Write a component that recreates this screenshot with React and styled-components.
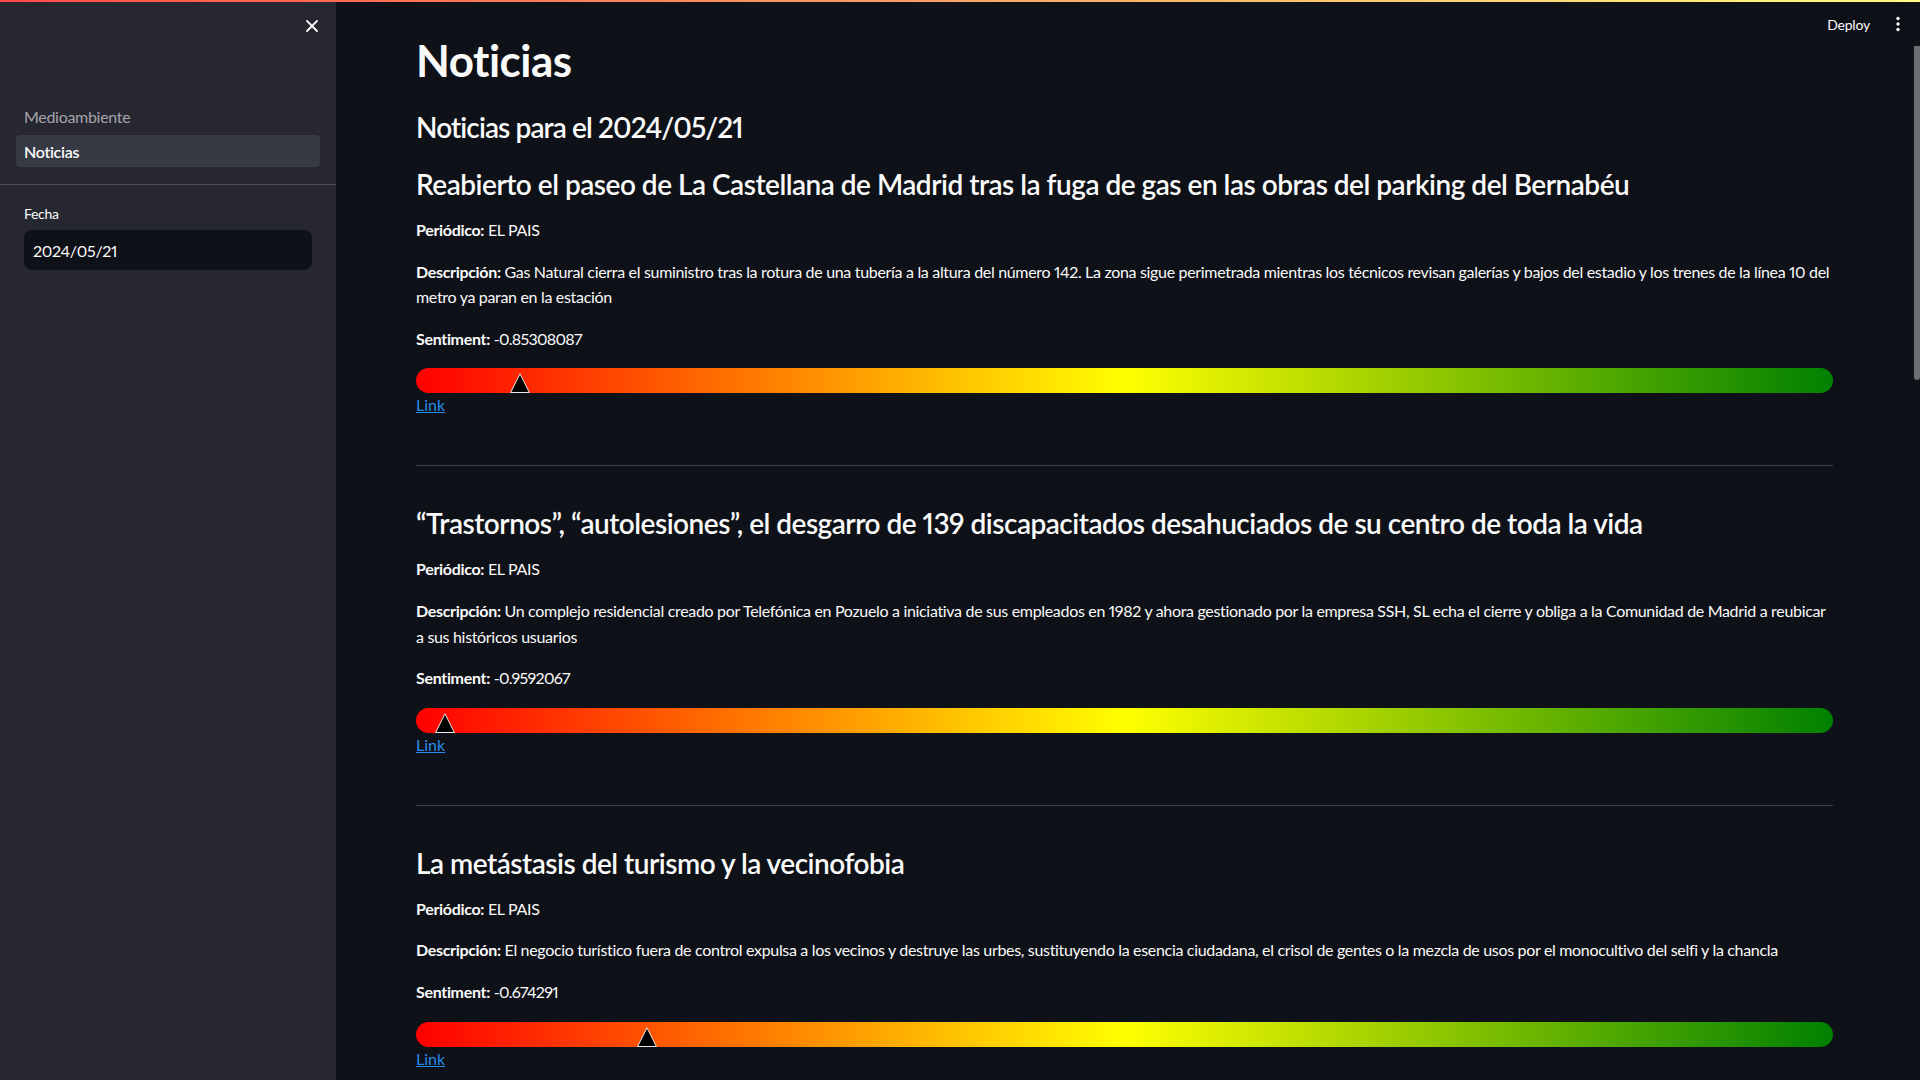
import React from "react";
import styled, { createGlobalStyle } from "styled-components";

const GlobalStyle = createGlobalStyle`
  html, body { margin: 0; padding: 0; height: 100%; overflow: hidden; background: #0e1117; }
  body {
    font-family: Lato, "Noto Sans", sans-serif;
    color: rgb(250,250,250);
    font-variant-numeric: proportional-nums;
    letter-spacing: -0.3px;
  }
  * { box-sizing: border-box; }
`;

const AppShell = styled.div`
  display: flex;
  flex-direction: column;
  width: 100vw;
  height: 100vh;
  overflow: hidden;
`;

const Decoration = styled.div`
  height: 2px;
  flex: none;
  background: linear-gradient(90deg, rgb(255, 75, 75), rgb(255, 253, 128));
`;

const Body = styled.div`
  flex: 1;
  display: flex;
  min-height: 0;
`;

const Sidebar = styled.aside`
  width: 336px;
  flex: none;
  background: #262730;
  display: flex;
  flex-direction: column;
`;

const SidebarHeader = styled.div`
  height: 48px;
  display: flex;
  align-items: center;
  justify-content: flex-end;
  padding-right: 12px;
`;

const IconButton = styled.button`
  width: 24px;
  height: 24px;
  border: none;
  background: transparent;
  padding: 0;
  display: flex;
  align-items: center;
  justify-content: center;
  cursor: pointer;
  color: rgb(250, 250, 250);
`;

const Nav = styled.nav`
  margin-top: 50px;
  padding: 0 16px 17px;
  display: flex;
  flex-direction: column;
  gap: 3px;
  border-bottom: 1px solid rgba(250, 250, 250, 0.2);
`;

const NavItem = styled.a`
  height: 32px;
  display: flex;
  align-items: center;
  padding-left: 8px;
  border-radius: 4px;
  font-size: 16px;
  text-decoration: none;
  color: ${(p) => (p.$active ? "rgb(250,250,250)" : "rgba(250,250,250,0.6)")};
  font-weight: ${(p) => (p.$active ? 600 : 400)};
  background: ${(p) => (p.$active ? "rgba(151,166,195,0.15)" : "transparent")};
`;

const SidebarContent = styled.div`
  padding: 19px 24px 0;
  display: flex;
  flex-direction: column;
`;

const FieldLabel = styled.label`
  font-size: 14px;
  line-height: 20px;
  margin-bottom: 6px;
`;

const DateInput = styled.div`
  height: 40px;
  border-radius: 8px;
  background: #0e1117;
  display: flex;
  align-items: center;
  padding-left: 9px;
  font-size: 16px;
`;

const Main = styled.main`
  flex: 1;
  position: relative;
  overflow: hidden;
  padding: 32px 87px 0 80px;
  display: flex;
  flex-direction: column;
`;

const Header = styled.div`
  position: absolute;
  top: 0;
  right: 0;
  height: 44px;
  display: flex;
  align-items: center;
  gap: 16px;
  padding-right: 10px;
`;

const DeployButton = styled.button`
  border: none;
  background: transparent;
  padding: 0;
  font-family: inherit;
  letter-spacing: -0.2px;
  font-size: 14px;
  color: rgb(250, 250, 250);
  cursor: pointer;
`;

const ScrollThumb = styled.div`
  position: absolute;
  right: 0;
  top: 44px;
  width: 6px;
  height: 334px;
  border-radius: 0 0 3px 3px;
  background: rgba(250, 250, 250, 0.4);
`;

const PageTitle = styled.h1`
  margin: 0;
  font-size: 44px;
  line-height: 53px;
  font-weight: 700;
  letter-spacing: -0.5px;
`;

const SubTitle = styled.h3`
  margin: 23px 0 0;
  font-size: 28px;
  line-height: 34px;
  font-weight: 600;
  letter-spacing: -0.9px;
`;

const Article = styled.article`
  display: flex;
  flex-direction: column;
  gap: 16px;
  margin-top: ${(p) => (p.$first ? "23px" : "40px")};
`;

const ArticleTitle = styled.h3`
  margin: 0;
  font-size: 28px;
  line-height: 34px;
  font-weight: 600;
  letter-spacing: -0.5px;
`;

const Para = styled.p`
  margin: 0;
  font-size: 16px;
  line-height: 25.6px;
  letter-spacing: -0.32px;
`;

const Label = styled.strong`
  font-weight: 700;
`;

const Num = styled.span`
  letter-spacing: -0.7px;
`;

const BarBlock = styled.div`
  display: flex;
  flex-direction: column;
  margin-top: 1px;
`;

const Bar = styled.div`
  position: relative;
  height: 25px;
  border-radius: 12.5px;
  background: linear-gradient(to right, #ff0000, #ffff00, #008000);
`;

const Marker = styled.svg`
  position: absolute;
  bottom: 0;
  transform: translateX(-50%);
`;

const NewsLink = styled.a`
  align-self: flex-start;
  font-size: 16px;
  line-height: 24px;
  letter-spacing: 0;
  color: rgb(40, 140, 235);
  text-decoration: underline;
`;

const Divider = styled.hr`
  margin: 48px 0 0;
  border: none;
  border-bottom: 1px solid rgba(250, 250, 250, 0.2);
  height: 0;
`;

const news = [
  {
    title: "Reabierto el paseo de La Castellana de Madrid tras la fuga de gas en las obras del parking del Bernabéu",
    paper: "EL PAIS",
    desc: "Gas Natural cierra el suministro tras la rotura de una tubería a la altura del número 142. La zona sigue perimetrada mientras los técnicos revisan galerías y bajos del estadio y los trenes de la línea 10 del metro ya paran en la estación",
    sentiment: -0.85308087,
    label: "-0.85308087",
  },
  {
    title: "“Trastornos”, “autolesiones”, el desgarro de 139 discapacitados desahuciados de su centro de toda la vida",
    paper: "EL PAIS",
    desc: "Un complejo residencial creado por Telefónica en Pozuelo a iniciativa de sus empleados en 1982 y ahora gestionado por la empresa SSH, SL echa el cierre y obliga a la Comunidad de Madrid a reubicar a sus históricos usuarios",
    sentiment: -0.9592067,
    label: "-0.9592067",
  },
  {
    title: "La metástasis del turismo y la vecinofobia",
    paper: "EL PAIS",
    desc: "El negocio turístico fuera de control expulsa a los vecinos y destruye las urbes, sustituyendo la esencia ciudadana, el crisol de gentes o la mezcla de usos por el monocultivo del selfi y la chancla",
    sentiment: -0.674291,
    label: "-0.674291",
  },
];

function CloseIcon() {
  return (
    <svg width="12" height="12" viewBox="0 0 12 12">
      <path d="M1 1 L11 11 M11 1 L1 11" stroke="currentColor" strokeWidth="1.8" strokeLinecap="round" />
    </svg>
  );
}

function KebabIcon() {
  return (
    <svg width="4" height="16" viewBox="0 0 4 16">
      <circle cx="2" cy="2.5" r="1.7" fill="rgb(250,250,250)" />
      <circle cx="2" cy="8" r="1.7" fill="rgb(250,250,250)" />
      <circle cx="2" cy="13.5" r="1.7" fill="rgb(250,250,250)" />
    </svg>
  );
}

function SentimentBar({ value }) {
  const pct = ((value + 1) / 2) * 100;
  return (
    <Bar>
      <Marker width="20" height="20" viewBox="0 0 20 20" style={{ left: `${pct}%` }}>
        <polygon points="10,0.8 19.4,19.5 0.6,19.5" fill="#000" stroke="#e8e8e8" strokeWidth="1" />
      </Marker>
    </Bar>
  );
}

export default function App() {
  return (
    <>
      <GlobalStyle />
      <AppShell>
        <Decoration />
        <Body>
          <Sidebar>
            <SidebarHeader>
              <IconButton aria-label="Cerrar">
                <CloseIcon />
              </IconButton>
            </SidebarHeader>
            <Nav>
              <NavItem href="#">Medioambiente</NavItem>
              <NavItem href="#" $active>Noticias</NavItem>
            </Nav>
            <SidebarContent>
              <FieldLabel>Fecha</FieldLabel>
              <DateInput>2024/05/21</DateInput>
            </SidebarContent>
          </Sidebar>
          <Main>
            <Header>
              <DeployButton>Deploy</DeployButton>
              <IconButton aria-label="Menú">
                <KebabIcon />
              </IconButton>
            </Header>
            <ScrollThumb />
            <PageTitle>Noticias</PageTitle>
            <SubTitle>Noticias para el 2024/05/21</SubTitle>
            {news.map((n, i) => (
              <React.Fragment key={i}>
                {i > 0 && <Divider />}
                <Article $first={i === 0}>
                  <ArticleTitle>{n.title}</ArticleTitle>
                  <Para><Label>Periódico:</Label> {n.paper}</Para>
                  <Para><Label>Descripción:</Label> {n.desc}</Para>
                  <Para><Label>Sentiment:</Label> <Num>{n.label}</Num></Para>
                  <BarBlock>
                    <SentimentBar value={n.sentiment} />
                    <NewsLink href="#">Link</NewsLink>
                  </BarBlock>
                </Article>
              </React.Fragment>
            ))}
          </Main>
        </Body>
      </AppShell>
    </>
  );
}
